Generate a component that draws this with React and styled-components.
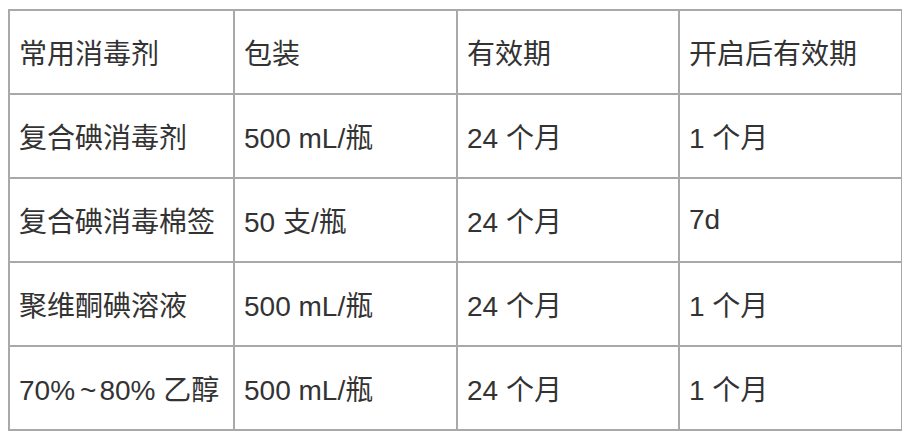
import React from "react";
import styled, { createGlobalStyle } from "styled-components";

const GlobalStyle = createGlobalStyle`
  body {
    margin: 9px 8px;
    background: #ffffff;
    font-family: "Liberation Sans", Arial, "Noto Sans CJK SC", sans-serif;
  }
`;

const Table = styled.table`
  border-collapse: collapse;
  table-layout: fixed;
  width: 893px;
  color: #333333;
  font-size: 28px;
`;

const Row = styled.tr`
  height: 84px;
`;

const Cell = styled.td`
  border: 2px solid #a9a9a9;
  padding: 0 9px;
  vertical-align: middle;
  text-align: left;
  font-weight: normal;
  white-space: nowrap;
`;

const HeadCell = styled(Cell).attrs({ as: "th" })``;

const Tilde = styled.span`
  padding: 0 3px 0 5px;
`;

const columns = [225, 223, 222, 223];

const header = ["常用消毒剂", "包装", "有效期", "开启后有效期"];

const rows = [
  ["复合碘消毒剂", "500 mL/瓶", "24 个月", "1 个月"],
  ["复合碘消毒棉签", "50 支/瓶", "24 个月", "7d"],
  ["聚维酮碘溶液", "500 mL/瓶", "24 个月", "1 个月"],
  [
    <>
      70%<Tilde>~</Tilde>80% 乙醇
    </>,
    "500 mL/瓶",
    "24 个月",
    "1 个月",
  ],
];

const App = () => {
  return (
    <>
      <GlobalStyle />
      <Table>
        <colgroup>
          {columns.map((w, i) => (
            <col key={i} style={{ width: w }} />
          ))}
        </colgroup>
        <thead>
          <Row>
            {header.map((h) => (
              <HeadCell key={h}>{h}</HeadCell>
            ))}
          </Row>
        </thead>
        <tbody>
          {rows.map((r, i) => (
            <Row key={i}>
              {r.map((c, j) => (
                <Cell key={j}>{c}</Cell>
              ))}
            </Row>
          ))}
        </tbody>
      </Table>
    </>
  );
};

export default App;
